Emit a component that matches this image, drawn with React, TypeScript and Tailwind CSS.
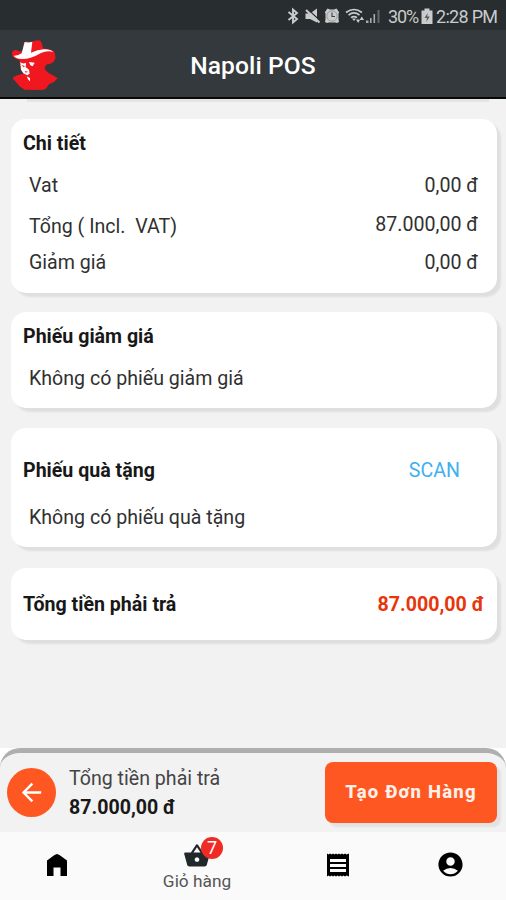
import type { ReactNode } from 'react';
import { MdShoppingBasket, MdAccountCircle, MdArrowBack } from 'react-icons/md';

function Logo() {
  return (
    <svg viewBox="0 0 210 210" className="h-[70px] w-[70px]">
      <path d="M68 64 71 40 Q73 34 83 35 Q94 38 104 32 Q118 28 123 34 L130 56 Q151 55 163 65 Q170 82 162 94 Q154 103 141 103 Q135 108 134 114 Q138 126 153 133 L173 144 163 155 147 163 137 177 126 180 74 179 60 170 45 153 37 144 48 137 72 130 63 120 58 89 Q43 87 37 77 Q33 63 44 60 Q51 59 56 64 Z" fill="#f1171e" />
      <path d="M74 36 Q87 39 97 35 L93 68 Q113 59 132 58 Q151 57 160 66 Q142 60 123 69 Q91 88 65 87 Q46 85 41 77 Q54 78 65 70 Z" fill="#fff" />
      <path d="M61 96 Q66 103 78 99 L77 111 87 119 89 131 82 136 70 130 63 119Z" fill="#fff" />
      <path d="M87 96 104 98 98 109 91 106Z M80 139 90 144 90 154 85 149Z" fill="#fff" />
      <path d="M65 105 75 108 71 112Z M74 123 84 125 77 128Z" fill="#f1171e" />
    </svg>
  );
}

function Bluetooth() {
  return (
    <svg viewBox="0 0 18 18" className="h-[18px] w-[18px]" fill="none" stroke="#c9cbcc" strokeWidth="1.9">
      <path d="M4.5 5 13 12 9 15.5V2.5L13 6 4.5 13" />
    </svg>
  );
}

function Muted() {
  return (
    <svg viewBox="0 0 18 18" className="h-[18px] w-[18px]">
      <path d="M1.5 6.5H6L13 1.5V15.5L6 12H1.5Z" fill="#c9cbcc" />
      <path d="M4 2.5 17 14.5" stroke="#282d2f" strokeWidth="1.2" />
      <path d="M2 3 15.5 15.5" stroke="#c9cbcc" strokeWidth="2" />
    </svg>
  );
}

function Alarm() {
  return (
    <svg viewBox="0 0 18 18" className="h-[18px] w-[18px]">
      <path d="M2 5 4.5 1.5 7 2.5H11L13.5 1.5 16 5 15.5 7V12L16 15 14 16 12.5 15.5H5.5L4 16 2 15 2.5 12V7Z" fill="#c9cbcc" />
      <path d="M9 5.5V9.5H12" stroke="#3c4245" strokeWidth="1.1" fill="none" />
      <circle cx="9" cy="9" r="5.2" fill="none" stroke="#868b8d" strokeWidth=".7" />
    </svg>
  );
}

function Wifi() {
  return (
    <svg viewBox="0 0 20 18" className="h-[18px] w-5" fill="none" stroke="#c9cbcc" strokeWidth="1.7">
      <path d="M1 5.5Q9 -.5 17 5.5M3.5 8.2Q9 3.7 14.5 8.2M6 10.7Q9 8.4 12 10.7" />
      <path d="M7 11.5 9 14 11 11.5Z" fill="#c9cbcc" stroke="none" />
      <path d="M11 12.5 13.2 16 15.2 12.5Z M14.5 13 16.8 9.5 19 13Z" fill="#c9cbcc" stroke="none" />
    </svg>
  );
}

function Signal() {
  return (
    <svg viewBox="0 0 15 15" className="h-[15px] w-[15px]" fill="#a7abad">
      <path d="M0 11.5h2.5V14H0zM4 9h1.6v5H4zM7.5 5h1.6v9H7.5z" />
      <path d="M11.5 1h2v13h-2z" fill="#62686b" />
    </svg>
  );
}

function Battery() {
  return (
    <svg viewBox="0 0 12 17" className="h-[17px] w-3">
      <path d="M3.5 .5H8.5V2.5H11.5V16H.5V2.5H3.5Z" fill="#c9cbcc" />
      <path d="M6.8 5 3.5 10H6L5.3 14 8.7 8.6H6.2Z" fill="#565c5f" />
    </svg>
  );
}

function Home() {
  return (
    <svg viewBox="0 0 28 28" className="mx-auto h-[28px] w-[28px]">
      <path d="M14 3 16.5 4 24 9.5V25H17.5V16.5H10.5V25H4V9.5L11.5 4Z" fill="#000" />
    </svg>
  );
}

function Receipt() {
  return (
    <svg viewBox="0 0 28 28" className="mx-auto h-[28px] w-[28px]">
      <path d="M3 2.5 4.5 3.5 6 2.5 7.5 3.5 9 2.5 10.5 3.5 12 2.5 13.5 3.5 15 2.5 16.5 3.5 18 2.5 19.5 3.5 21 2.5 22.5 3.5 25 2.5V25.5L22.5 24.5 21 25.5 19.5 24.5 18 25.5 16.5 24.5 15 25.5 13.5 24.5 12 25.5 10.5 24.5 9 25.5 7.5 24.5 6 25.5 4.5 24.5 3 25.5Z" fill="#000" />
      <path d="M6 8H22V11H6ZM6 13H22V16H6ZM6 18H22V21H6Z" fill="#fafafa" />
    </svg>
  );
}

function Card({ className, children }: { className: string; children: ReactNode }) {
  return (
    <section className={`rounded-[15px] bg-white shadow-[4px_4px_2px_#dfdfdf] ${className}`}>
      {children}
    </section>
  );
}

export default function App() {
  return (
    <div className="flex h-[900px] w-[506px] flex-col overflow-hidden whitespace-pre bg-[#f2f2f2] font-[Roboto,sans-serif] text-[19.6px] leading-6 text-[#303030]">
      <div className="flex h-[30px] shrink-0 items-center bg-[#282d2f] pt-[2px] pl-[284px] text-[18px] text-[#c9cbcc]">
        <div className="shrink-0"><Bluetooth /></div>
        <div className="ml-[2px] shrink-0"><Muted /></div>
        <div className="ml-[1px] shrink-0"><Alarm /></div>
        <div className="ml-[4px] shrink-0"><Wifi /></div>
        <div className="ml-[1px] shrink-0"><Signal /></div>
        <span className="ml-[7px] w-[33px] shrink-0 pt-[1px] tracking-[-1.1px]">30%</span>
        <div className="shrink-0"><Battery /></div>
        <span className="ml-[3px] shrink-0 pt-[1px] tracking-[-0.7px]">2:28 PM</span>
      </div>
      <header className="grid h-[69px] shrink-0 grid-cols-[70px_1fr_70px] items-center border-b-2 border-[#080a0a] bg-[#33393c]">
        <div className="h-[67px]"><Logo /></div>
        <h1 className="pt-[4px] text-center text-[24.6px] font-medium tracking-[0.1px] text-white">Napoli POS</h1>
      </header>
      <main className="flex h-[649px] shrink-0 flex-col pr-[9px] pl-[11px]">
        <div className="ml-[16px] h-[3px] w-[462px] shrink-0 bg-[#e4e4e4]" />
        <Card className="mt-[17px] h-[174px] shrink-0 pr-[19px] pl-[12px]">
          <h2 className="flex h-12 items-center pt-[1px] font-bold text-[#181818]">Chi tiết</h2>
          <div className="flex h-9 items-center justify-between pt-[1px] pl-[6px]"><span>Vat</span><span>0,00 đ</span></div>
          <div className="flex h-[43px] items-center justify-between pl-[6px]"><span className="pt-[4px]">Tổng ( Incl.  VAT)</span><span>87.000,00 đ</span></div>
          <div className="flex h-8 items-center justify-between pt-[1px] pl-[6px]"><span>Giảm giá</span><span>0,00 đ</span></div>
        </Card>
        <Card className="mt-[19px] h-[96px] shrink-0 pl-[12px]">
          <h2 className="flex h-12 items-center pt-[1px] font-bold text-[#181818]">Phiếu giảm giá</h2>
          <p className="flex h-9 items-center pt-[1px] pl-[6px]">Không có phiếu giảm giá</p>
        </Card>
        <Card className="mt-[20px] h-[119px] shrink-0 pt-[18px] pr-[37px] pl-[12px]">
          <div className="flex h-12 items-center justify-between pt-[2px]">
            <h2 className="font-bold text-[#181818]">Phiếu quà tặng</h2>
            <button className="text-[#3fb0f0]">SCAN</button>
          </div>
          <p className="flex h-[46px] items-center pt-[1px] pl-[6px]">Không có phiếu quà tặng</p>
        </Card>
        <Card className="mt-[21px] flex h-[72px] shrink-0 items-center justify-between pt-[2px] pr-[13px] pl-[12px] font-bold text-[#181818]">
          <span>Tổng tiền phải trả</span>
          <span className="text-[#e8350c]">87.000,00 đ</span>
        </Card>
      </main>
      <div className="h-[84px] shrink-0 bg-white">
        <div className="flex h-full items-center rounded-t-[20px] border-t-[5px] border-[#afafaf] bg-[#f2f2f2] pr-[9px] pl-[7px]">
          <button className="flex h-[49px] w-[49px] items-center justify-center rounded-full bg-[#ff5722] text-white"><MdArrowBack className="h-[29px] w-[29px]" /></button>
          <div className="ml-[13px] flex flex-1 flex-col gap-[5px] pt-[2px]">
            <span className="text-[#444]">Tổng tiền phải trả</span>
            <span className="font-bold text-[#181818]">87.000,00 đ</span>
          </div>
          <button className="flex h-[61px] w-[172px] items-center justify-center rounded-[8px] bg-[#ff5722] pb-[1px] text-[18.5px] font-extrabold tracking-[1.2px] text-[#fff1e9] shadow-[4px_4px_2px_#e2e2e2]">Tạo Đơn Hàng</button>
        </div>
      </div>
      <nav className="grid h-[68px] shrink-0 grid-cols-[113px_168px_113px_112px] items-center bg-[#fafafa] pb-[3px] text-black">
        <Home />
        <div className="flex h-full flex-col items-center pt-[10px]">
          <div className="relative text-[#21282c]">
            <MdShoppingBasket className="h-[28px] w-[28px]" />
            <span className="absolute -top-[5px] left-[18px] flex h-[22px] w-[22px] items-center justify-center rounded-full bg-[#ef2b25] text-[18px] text-white">7</span>
          </div>
          <span className="-mt-[1px] text-[17.3px] text-[#555]">Giỏ hàng</span>
        </div>
        <Receipt />
        <MdAccountCircle className="mx-auto h-[29px] w-[29px]" />
      </nav>
    </div>
  );
}
